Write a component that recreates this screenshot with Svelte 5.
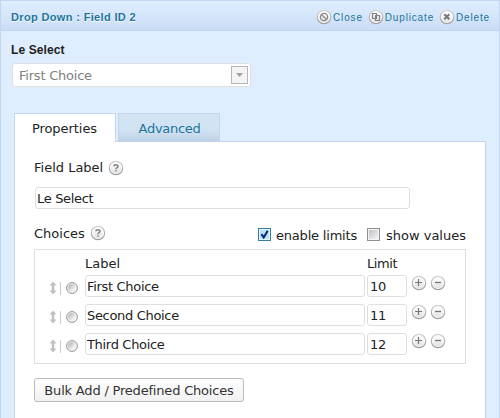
<script>
  let choices = $state([
    { label: 'First Choice', limit: '10' },
    { label: 'Second Choice', limit: '11' },
    { label: 'Third Choice', limit: '12' }
  ]);
  const actions = ['Close', 'Duplicate', 'Delete'];
</script>

{#snippet disc(kind)}
  <svg class="disc" width="16" height="16" viewBox="0 0 16 16">
    <defs>
      <linearGradient id="face" x1="0" y1="0" x2="0" y2="1">
        <stop offset="0" stop-color="#fff" />
        <stop offset="1" stop-color="#e2e2e2" />
      </linearGradient>
      <linearGradient id="rim" x1="0" y1="0" x2="0" y2="1">
        <stop offset="0" stop-color="#d2d2d2" />
        <stop offset="1" stop-color="#9c9c9c" />
      </linearGradient>
    </defs>
    <circle cx="8" cy="8" r="6.7" fill="#fff" stroke="url(#rim)" stroke-width="1.2" />
    <circle cx="8" cy="8" r="5.2" fill="url(#face)" />
    {#if kind === 'plus'}
      <path d="M4 7.5h7M7.5 4v7" stroke="#777" stroke-width="1.2" fill="none" />
    {:else if kind === 'minus'}
      <path d="M5 7.5h6" stroke="#777" stroke-width="1.3" fill="none" />
    {:else if kind === 'help'}
      <path d="M6 6.3C6 4.4 10 4.3 10 6.3C10 7.6 8 7.6 8 9.2M8 10.2v1.4" stroke="#808080" stroke-width="1.5" fill="none" />
    {:else if kind === 'Close'}
      <circle cx="8" cy="8" r="3.6" stroke="#888" stroke-width="1.3" fill="none" />
      <path d="M5.5 5.5l5 5" stroke="#888" stroke-width="1.3" />
    {:else if kind === 'Duplicate'}
      <path d="M4.5 4.5h4v5h-4zM7.5 6.5h4v5h-4z" stroke="#808080" stroke-width="1.2" fill="none" />
    {:else}
      <path d="M5.3 5.3l5 5M10.3 5.3l-5 5" stroke="#777" stroke-width="2" />
    {/if}
  </svg>
{/snippet}

<div class="field">
  <header>
    <span class="title">Drop Down : Field ID 2</span>
    <nav>
      {#each actions as action}
        <a class={action.toLowerCase()}>{@render disc(action)}<span>{action}</span></a>
      {/each}
    </nav>
  </header>

  <div class="preview">
    <div class="caption">Le Select</div>
    <div class="select">
      <span>First Choice</span>
      <i><svg width="7" height="4" viewBox="0 0 7 4"><path d="M0 0h7L3.5 4z" fill="#a0a0a0" /></svg></i>
    </div>
  </div>

  <div class="tabs">
    <div class="tab active"><span>Properties</span></div>
    <div class="tab"><span class="adv">Advanced</span></div>
  </div>

  <section>
    <div class="line first"><span>Field Label</span>{@render disc('help')}</div>
    <div class="box wide"><span>Le Select</span></div>

    <div class="line second">
      <span>Choices</span>{@render disc('help')}
      <div class="checks">
        <svg width="13" height="13" viewBox="0 0 13 13">
          <rect x=".5" y=".5" width="12" height="12" fill="#e8f6fd" stroke="#367da6" />
          <rect x="2" y="2" width="9" height="9" fill="#b9e3f8" />
          <path d="M3.4 6.2l2.3 3.2L9.7 2.8" fill="none" stroke="#0b2470" stroke-width="2" />
        </svg>
        <span class="el">enable limits</span>
        <svg width="13" height="13" viewBox="0 0 13 13">
          <defs><linearGradient id="chk" x1="0" y1="0" x2="1" y2="1"><stop offset="0" stop-color="#bfc3c8" /><stop offset="1" stop-color="#f4f4f4" /></linearGradient></defs>
          <rect x=".5" y=".5" width="12" height="12" fill="#f4f4f4" stroke="#8e8f8f" />
          <rect x="2" y="2" width="9" height="9" fill="url(#chk)" />
        </svg>
        <span class="sv">show values</span>
      </div>
    </div>

    <div class="choices">
      <div class="heads"><span class="hl">Label</span><span class="hm">Limit</span></div>
      {#each choices as choice}
        <div class="row">
          <svg class="grip" width="12" height="14" viewBox="0 0 12 14">
            <path d="M4 0.4L7.4 4.6H5.2v4.8h2.2L4 13.6L0.6 9.4H2.8V4.6H0.6z" fill="#bfbfbf" />
            <path d="M11.5 1v13" stroke="#ccc" />
          </svg>
          <svg class="radio" width="12" height="12" viewBox="0 0 12 12">
            <defs><linearGradient id="rad" x1="0" y1="0" x2="1" y2="1"><stop offset="0.15" stop-color="#b4b9be" /><stop offset="0.7" stop-color="#f0f0f0" /></linearGradient></defs>
            <circle cx="6" cy="6" r="5.4" fill="#f8f8f8" stroke="#8f9192" />
            <circle cx="6" cy="6" r="3.9" fill="url(#rad)" />
          </svg>
          <div class="box name"><span>{choice.label}</span></div>
          <div class="box limit"><span>{choice.limit}</span></div>
          <div class="buttons">{@render disc('plus')}{@render disc('minus')}</div>
        </div>
      {/each}
    </div>

    <button><span>Bulk Add / Predefined Choices</span></button>
  </section>
</div>

<style>
  :global(body) { margin: 0; overflow: hidden; }
  * { box-sizing: border-box; }
  span { white-space: nowrap; }
  svg { display: block; flex: none; }
  .field {
    width: 500px; height: 418px; overflow: hidden;
    border: 1px solid #c2d7ef; border-bottom: 0;
    background: #dfeeff; color: #222;
    font: 13px/16px 'DejaVu Sans', Verdana, sans-serif;
    display: flex; flex-direction: column;
  }
  header {
    height: 30px; flex: none; display: flex; align-items: center; justify-content: space-between;
    padding: 2px 9px 0 10px; border-bottom: 1px solid #c2d7ef;
    background: linear-gradient(#e0efff, #cadcf5);
    font-family: 'Liberation Sans', Arial, sans-serif; font-size: 11px; color: #21759b;
  }
  .title { font-weight: bold; letter-spacing: 0.35px; text-shadow: 0 1px 0 #fff; }
  nav { display: flex; gap: 5px; font-size: 10px; }
  nav a { display: flex; align-items: center; gap: 1px; letter-spacing: 0.84px; }
  nav span { padding-top: 2px; }
  .preview { padding: 11px 0 0 10px; height: 82px; flex: none; }
  .caption { height: 21px; font: bold 12px/16px 'Liberation Sans', Arial, sans-serif; letter-spacing: 0.1px; }
  .select {
    margin-left: 1px; width: 239px; height: 24px; background: #fff; border: 1px solid #dfdfdf; border-radius: 3px;
    display: flex; align-items: center; justify-content: space-between; padding: 2px 2px 0 6px; color: #808080; letter-spacing: -0.22px;
  }
  .select i { width: 17px; height: 18px; margin-top: -2px; border: 1px solid #b4b8ba; background: #f4f4f4; display: flex; align-items: center; justify-content: center; }
  .tabs { display: flex; gap: 2px; padding-left: 13px; height: 28px; flex: none; }
  .tab {
    width: 102px; height: 28px; border: 1px solid #c2d7ef; border-bottom: 0; padding-top: 7px; text-align: center;
    color: #21759b; background: linear-gradient(#d2e4f4 55%, #bfd2e5);
  }
  .tab.active { height: 29px; background: #fff; color: #222; z-index: 1; }
  .tab span { margin-left: -1px; letter-spacing: -0.05px; }
  .tab .adv { margin-left: 1px; letter-spacing: -0.3px; }
  section { margin-left: 13px; width: 472px; height: 278px; flex: none; background: #fff; border: 1px solid #c2d3ec; border-bottom: 0; padding: 18px 19px 0; }
  .line { display: flex; align-items: center; }
  .line > .disc { margin-left: 5px; }
  .first { height: 15px; }
  .box { height: 22px; border: 1px solid #dfdfdf; border-radius: 3px; background: #fff; padding: 2px 0 0 1px; line-height: 17px; letter-spacing: -0.32px; }
  .wide { width: 375px; margin: 12px 0 0 1px; }
  .second { height: 16px; margin: 16px 0 0; }
  .second > span { padding-top: 2px; }
  .checks { margin: 4px 0 0 auto; display: flex; align-items: center; }
  .checks svg { margin-top: -1px; }
  .checks span { padding-top: 1px; }
  .el { margin: 0 10px 0 5px; letter-spacing: -0.2px; }
  .sv { margin-left: 6px; }
  .choices { width: 432px; height: 115px; border: 1px solid #dfdfdf; margin-top: 8px; }
  .heads { height: 25px; padding: 6px 0 0 50px; display: flex; }
  .hl { width: 282px; }
  .hm { letter-spacing: -0.4px; }
  .row { display: flex; height: 29px; padding-left: 14px; }
  .grip { margin-top: 6px; }
  .radio { margin: 7px 7px 0 5px; }
  .name { width: 280px; }
  .limit { width: 40px; margin-left: 2px; padding-left: 2px; }
  .buttons { display: flex; gap: 3px; margin-left: 4px; }
  button {
    margin-top: 14px; width: 210px; height: 24px; padding: 2px 0 0; display: block; text-align: center;
    font: inherit; letter-spacing: -0.19px; color: #333; border: 1px solid #bbb; border-radius: 3px; background: linear-gradient(#fefefe, #f1f1f1);
  }
</style>
